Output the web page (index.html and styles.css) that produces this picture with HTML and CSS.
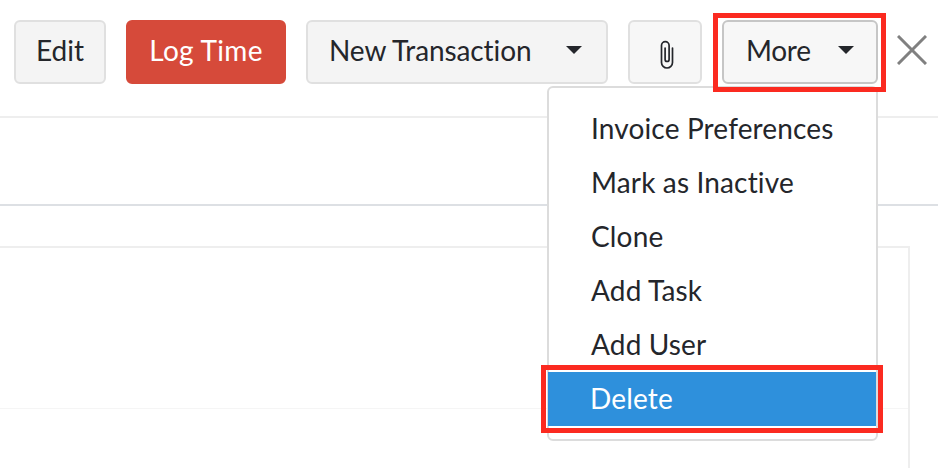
FILE: index.html
```html
<!DOCTYPE html>
<html>
	<head>
		<meta charset="utf-8">
		<title>Project</title>
		<link rel="stylesheet" href="styles.css">
	</head>
	<body>
		<div class="toolbar">
			<a class="btn btn_edit" href="javascript:;">Edit</a>
			<a class="btn btn_log" href="javascript:;">Log Time</a>
			<a class="btn btn_new" href="javascript:;">New Transaction<i class="caret"></i></a>
			<a class="btn btn_clip" href="javascript:;">
				<svg width="14" height="29" viewBox="0 0 14 29" fill="none" stroke="#24262b" stroke-width="1.7" stroke-linecap="round">
					<path d="M12.5 8V22.5a5.5 5.5 0 0 1-11 0V5.5a3.8 3.8 0 0 1 7.6 0V19.5a2 2 0 0 1-4 0V8"/>
				</svg>
			</a>
			<div class="more_wrap">
				<a class="btn btn_more mark" href="javascript:;">More<i class="caret"></i></a>
				<ul class="menu">
					<li>Invoice Preferences</li>
					<li>Mark as Inactive</li>
					<li>Clone</li>
					<li>Add Task</li>
					<li>Add User</li>
					<li class="active mark">Delete</li>
				</ul>
			</div>
			<a class="close" href="javascript:;">
				<svg width="30" height="30" viewBox="0 0 30 30" stroke="#808080" stroke-width="3">
					<path d="M1 1l28 28M29 1L1 29"/>
				</svg>
			</a>
		</div>
		<div class="band"></div>
		<div class="panel">
			<div class="panel_row"></div>
		</div>
	</body>
</html>
```

FILE: styles.css
```css
*{ margin: 0; padding: 0; box-sizing: border-box; text-decoration: none; list-style-type: none; }
html,body{ height: 100%; background-color: #fff; overflow: hidden; }
body{ font-family: "Lato", "Liberation Sans", sans-serif; font-size: 28px; letter-spacing: 0.15px; color: #24262b; }

.toolbar{ display: flex; height: 118px; padding: 20px 0 0 14px; border-bottom: 2px solid #eee; }
.btn{ display: flex; align-items: center; height: 64px; padding-bottom: 4px; border: 2px solid #e0e0e0; border-radius: 6px; background-color: #f4f4f4; color: #24262b; margin-right: 20px; }
.btn_edit{ width: 92px; justify-content: center; letter-spacing: 0; }
.btn_log{ width: 160px; justify-content: center; background-color: #d64a3a; border-color: #d64a3a; color: #fff; letter-spacing: 0.3px; }
.btn_new{ width: 302px; padding-left: 21px; padding-right: 24px; justify-content: space-between; letter-spacing: -0.1px; }
.btn_clip{ width: 74px; padding: 4px 0 0 3px; justify-content: center; background-color: #f7f7f7; }
.btn_more{ position: relative; z-index: 6; width: 156px; padding-left: 22px; padding-right: 22px; justify-content: space-between; margin-right: 0; background-color: #f7f7f7; border-color: #c6c6c6; letter-spacing: -0.3px; }
.caret{ width: 0; height: 0; border-style: solid; border-width: 8px 8px 0 8px; border-color: #24262b transparent transparent transparent; }

.more_wrap{ position: relative; }
.menu{ position: absolute; z-index: 5; top: 66px; right: 0; width: 331px; height: 355px; padding-top: 14px; background-color: #fff; border: 2px solid #dcdcdc; border-radius: 6px; }
.menu li{ height: 54px; line-height: 52px; padding-left: 42px; }
.menu li.active{ position: relative; margin-left: -1px; padding-left: 42px; background-color: #2e90dc; color: #fff; }

/* red annotation boxes */
.mark::after{ content: ""; position: absolute; border: 5px solid #fb2a20; pointer-events: none; }
.btn_more.mark::after{ top: -9px; left: -11px; right: -10px; bottom: -10px; }
.menu .mark::after{ top: -7px; left: -7px; right: -7px; bottom: -7px; }

.close{ display: block; margin: 15px 0 0 19px; height: 30px; }

.band{ height: 88px; border-bottom: 2px solid #dde0e4; }
.panel{ width: 910px; height: 222px; margin-top: 40px; border-top: 2px solid #eee; border-right: 2px solid #eee; }
.panel_row{ height: 161px; border-bottom: 1px solid #f5f5f5; }
```
